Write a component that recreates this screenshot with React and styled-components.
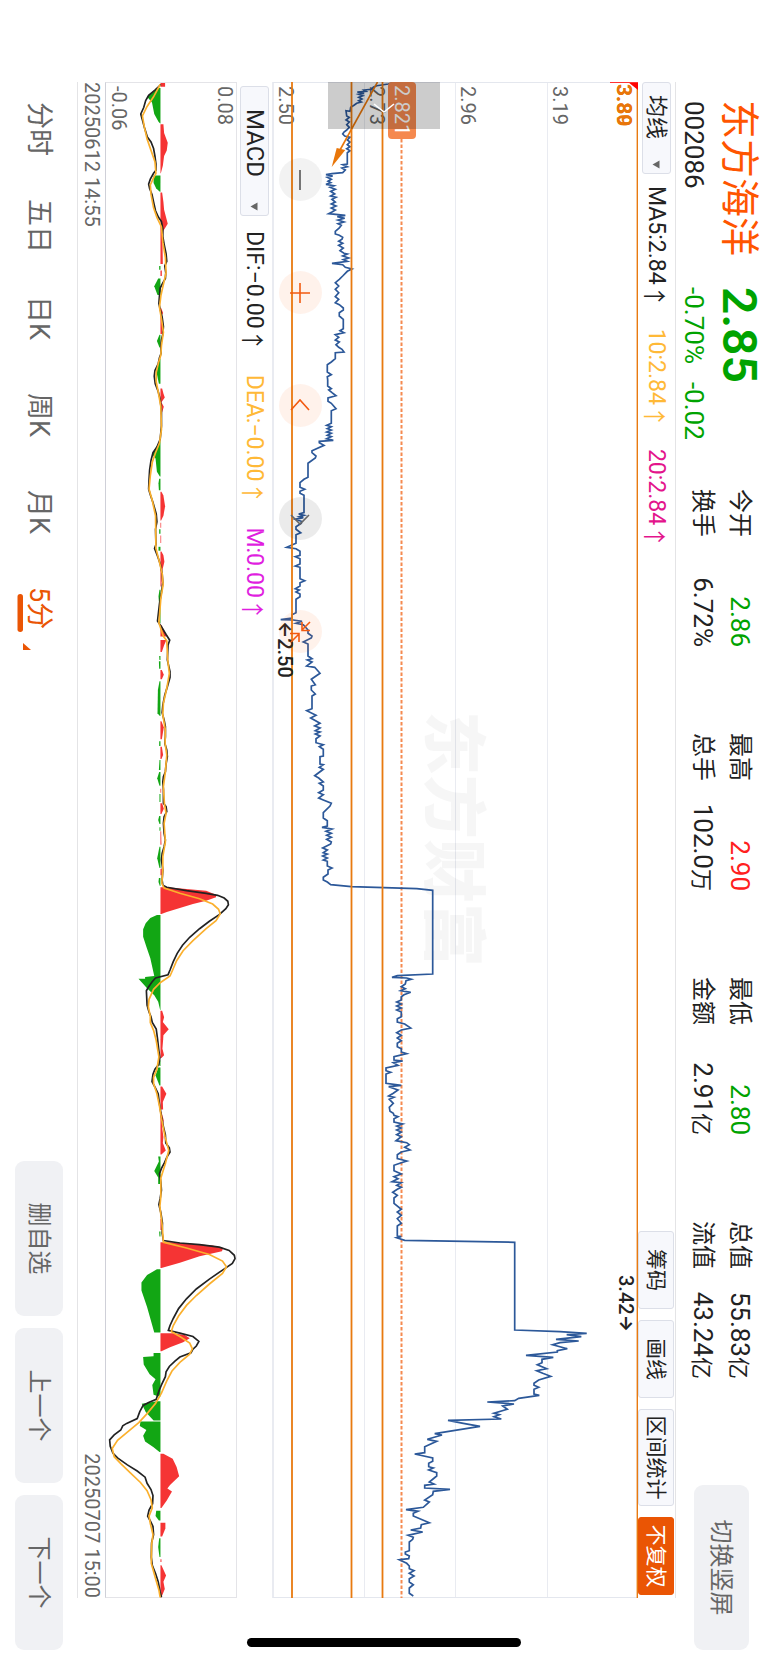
import React from "react";
import styled, { createGlobalStyle, css } from "styled-components";

const GlobalStyle = createGlobalStyle`
  * { box-sizing: border-box; }
  body {
    margin: 0;
    background: #fff;
    color: #222;
    font-family: Roboto, "Noto Sans CJK SC", sans-serif;
  }
  button, select { font-family: inherit; color: inherit; margin: 0; }
`;

/* ---------- landscape frame ---------- */

const Viewport = styled.div`
  width: 100vw;
  height: 100vh;
  overflow: hidden;
`;

const Landscape = styled.main`
  position: relative;
  display: flex;
  flex-direction: column;
  width: 100vh;
  height: 100vw;
  background: #fff;
  transform-origin: 0 0;
  transform: translateX(100vw) rotate(90deg);
`;

const HomeIndicator = styled.div`
  position: absolute;
  right: 16px;
  top: 50%;
  width: 9px;
  height: 274px;
  margin-top: -137px;
  border-radius: 5px;
  background: #000;
`;

/* ---------- header ---------- */

const Header = styled.header`
  display: flex;
  height: 92px;
  padding-left: 100px;
  padding-right: 13px;
`;

const Identity = styled.div`
  width: 187px;
  padding-top: 6px;
`;

const StockName = styled.h1`
  margin: 0;
  font-size: 39px;
  line-height: 46px;
  font-weight: 400;
  color: #ff5500;
`;

const StockCode = styled.div`
  padding-left: 1px;
  font-size: 26px;
  line-height: 44px;
`;

const Quote = styled.div`
  width: 202px;
  padding-top: 6px;
  color: #00a300;
`;

const Price = styled.div`
  font-size: 48px;
  line-height: 46px;
  font-weight: 600;
`;

const Change = styled.div`
  display: flex;
  gap: 18px;
  font-size: 26px;
  line-height: 44px;
`;

const Stats = styled.dl`
  display: grid;
  grid-auto-flow: column;
  grid-template-rows: 37px 37px;
  grid-auto-columns: 158px;
  column-gap: 86px;
  margin: 0;
  padding-top: 10px;
`;

const Stat = styled.div`
  display: flex;
  justify-content: space-between;
  align-items: center;
`;

const StatLabel = styled.dt`
  font-size: 24px;
  line-height: 37px;
`;

const StatValue = styled.dd`
  margin: 0;
  font-size: 26px;
  line-height: 37px;
  color: ${(p) => p.$color || "inherit"};
`;

const Unit = styled.span`
  font-size: 22px;
`;

const GreyButton = styled.button`
  width: ${(p) => p.$width}px;
  height: ${(p) => p.$height}px;
  padding: 0;
  border: 0;
  border-radius: 9px;
  background: #f0f1f4;
  color: #666;
  font-size: 24px;
  line-height: 30px;
`;

const SwitchSlot = styled.div`
  margin-left: auto;
  padding-top: 19px;
`;

/* ---------- chart panel ---------- */

const Panel = styled.section`
  flex: 1;
  display: flex;
  flex-direction: column;
  margin: 0 65px 0 82px;
`;

const Toolbar = styled.div`
  display: flex;
  align-items: center;
  height: ${(p) => p.$height}px;
  padding: 0 3px 0 ${(p) => p.$inset || 0}px;
  border-top: 1px solid ${(p) => (p.$line ? "#e4e4e6" : "#e9ebf1")};
`;

const Picker = styled.label`
  position: relative;
  display: block;
  width: ${(p) => p.$width}px;
  height: 29px;
  margin-right: ${(p) => p.$after}px;
  svg {
    position: absolute;
    right: 5px;
    top: 11px;
    pointer-events: none;
  }
`;

const PickerSelect = styled.select`
  appearance: none;
  width: 100%;
  height: 100%;
  padding: 0 0 0 ${(p) => p.$pad}px;
  border: 1px solid #dcdfe8;
  border-radius: 3px;
  background: #f7f8fc;
  font-size: ${(p) => p.$size}px;
  line-height: 27px;
`;

const Indicator = styled.span`
  display: flex;
  align-items: center;
  gap: 6px;
  margin-right: ${(p) => p.$after}px;
  font-size: 23px;
  line-height: 30px;
  color: ${(p) => p.$color};
`;

const Tools = styled.div`
  display: flex;
  gap: 11px;
  margin-left: auto;
`;

const ToolButton = styled.button`
  width: ${(p) => (p.$wide ? 97 : 78)}px;
  height: 36px;
  padding: 0;
  border: 1px solid #dcdfe8;
  border-radius: 3px;
  background: #f7f8fc;
  font-size: 21px;
  line-height: 30px;
  ${(p) =>
    p.$active &&
    css`
      border-color: #ea5504;
      background: #ea5504;
      color: #fff;
    `}
`;

const ChartArea = styled.div`
  position: relative;
  flex: 1;
  display: flex;
  border: solid #e4e7ee;
  border-width: 0 1px;
`;

const PriceRows = styled.div`
  flex: 1;
  display: grid;
  grid-template-rows: repeat(4, 1fr);
`;

const PriceRow = styled.div`
  display: flex;
  align-items: flex-end;
  padding: 0 0 1px 3px;
  border-bottom: 1px solid #e9ebf1;
  font-size: 20px;
  line-height: 22px;
  color: #666;
`;

const Plot = styled.svg`
  position: absolute;
  inset: 0 -1px;
  width: calc(100% + 2px);
  height: 100%;
`;

const Watermark = styled.div`
  position: absolute;
  left: 628px;
  top: 140px;
  font-size: 64px;
  line-height: 92px;
  font-weight: 900;
  color: rgba(0, 0, 0, 0.035);
`;

const PriceTag = styled.div`
  position: absolute;
  left: -1px;
  top: 222px;
  width: 57px;
  height: 28px;
  padding-left: 3px;
  border-radius: 4px;
  background: #f5894f;
  color: #fff;
  font-size: 20px;
  line-height: 28px;
`;

const LevelLabel = styled.div`
  position: absolute;
  left: 1px;
  top: 2px;
  font-size: 21px;
  line-height: 24px;
  font-weight: 700;
  color: #e8760a;
`;

const Extreme = styled.div`
  position: absolute;
  left: ${(p) => p.$x}px;
  top: ${(p) => p.$y}px;
  display: flex;
  align-items: center;
  font-size: 20px;
  line-height: 22px;
  font-weight: 500;
`;

const Drawer = styled.button`
  position: absolute;
  left: -1px;
  top: 198px;
  width: 47px;
  height: 112px;
  padding: 0;
  border: 0;
  background: rgba(0, 0, 0, 0.2);
  svg { display: block; margin-left: 17px; }
`;

const ZoomBar = styled.div`
  position: absolute;
  left: 75px;
  bottom: 6px;
  display: flex;
  gap: 70px;
`;

const RoundButton = styled.button`
  width: 43px;
  height: 43px;
  padding: 0;
  border: 0;
  border-radius: 50%;
  background: ${(p) => p.$bg};
  svg { display: block; margin: auto; }
`;

const MacdArea = styled.div`
  position: relative;
  display: flex;
  flex-direction: column;
  justify-content: space-between;
  height: 132px;
  padding: 0 0 2px 3px;
  border: 1px solid #e4e4e8;
  border-bottom-color: #cfd0d8;
  font-size: 20px;
  line-height: 22px;
  color: #666;
`;

const Dates = styled.div`
  display: flex;
  justify-content: space-between;
  height: 28px;
  border-bottom: 1px solid #e4e4e6;
  font-size: 20px;
  line-height: 27px;
  color: #666;
`;

/* ---------- footer ---------- */

const Footer = styled.footer`
  display: flex;
  align-items: center;
  height: 77px;
  padding: 0 13px 2px 102px;
`;

const Tabs = styled.nav`
  display: flex;
`;

const Tab = styled.a`
  position: relative;
  width: 97px;
  font-size: 27px;
  line-height: 36px;
  text-decoration: none;
  color: ${(p) => (p.$active ? "#ea5504" : "#666")};
  svg { position: absolute; left: 6px; top: 25px; }
`;

const FooterButtons = styled.div`
  display: flex;
  gap: 12px;
  margin-left: auto;
`;

/* ---------- chart data ---------- */

const pairs = (s) => s.trim().split(/\s+/).map((p) => p.split(",").map(Number));

/* price samples: level, time; each run begins at its own time offset */
const PRICE_RUNS = [
  [0, `400,38 385,42 350,47 340,52 335,58 312,60 318,64 292,66 312,70 296,73 308,77 296,82 306,87 296,92 304,96 290,100 282,106 272,112 270,124 258,122 260,138 268,142 258,150 268,156 260,164 268,172 260,180 252,186 248,192 254,198 270,202 262,210 270,216 262,224 270,230 260,236 270,242 262,248 262,282 248,284 262,290 246,294 256,300 248,308 216,311 198,314 218,318 202,322 214,328 204,334 212,338 198,343 222,347 210,352 226,358 212,364 224,372 212,378 228,382 216,388 226,396 214,402 228,408 214,414 226,420 216,426 206,431 256,436 232,440 254,445 234,450 252,456 234,461 244,466 238,474 226,484 226,492 238,496 248,502 246,508 236,514 248,520 236,526 250,534 240,542 252,550 262,552 248,558 266,564 250,569 262,574 216,580 248,584 256,592 276,597 262,604 248,618 238,628 226,638 236,648 226,658 236,668 226,680 236,688 226,698 238,704 250,714 250,720 238,728 238,738 250,748 250,776 240,782 252,788 226,794 236,802 226,810 238,816 228,824 236,832 246,838 252,846 226,848 226,866 214,876 202,884 202,906 214,914 202,920`],
  [930, `203,0 203,18 214,26 206,30 216,38 228,47 204,54 204,64 214,70 228,86 214,92 214,130 200,136 214,140 202,146 214,150 200,156 214,160 202,166 214,170 200,176 220,181 178,184 178,188 192,196 156,212 156,218 168,228 166,234 144,250 144,292 132,298 120,308 120,322 134,328 120,334 120,340 132,346 132,398 116,402 132,406 118,410 130,413 106,418 124,424 124,430 108,440 108,448 122,458 108,464 108,490 80,502 108,506 120,514 120,526 106,530 120,536 120,552 106,558 120,562 120,596 134,602 120,608 120,618 106,626 118,630 108,636 120,642 120,650 108,658 108,698 96,704 96,714 62,719 100,720 126,724 108,730 130,734 144,750 144,760 156,768 154,774 130,786 144,792 144,828 156,836 142,840 156,846 140,858 164,862 180,880 154,898 166,914 154,918`],
  [1860, `154,0 166,12 156,18 156,56 140,62 168,76 152,84 180,100 164,108 180,114 166,122 180,126 166,132 180,138 168,146 168,158 190,164 178,170 190,178 190,198 180,200 180,222 190,224 178,232 190,238 164,257 176,264 190,276 178,280 190,288 190,300 176,308 190,314 176,324 190,330 214,340 210,348 190,368 190,384 202,392 202,408 186,412 216,417 198,424 214,430 200,436 214,442 200,448 214,456 212,462 188,474 202,480 190,488 202,492 188,498 202,504 190,510 202,514 202,528 216,534 204,540 204,552 190,562 190,570 202,576 212,584 274,590 470,596 518,601 518,852 412,857 396,862 440,864 454,868 438,872 436,882 424,890 436,896 422,902 452,907 432,914 424,920 424,930 410,936 424,942 410,948 424,954 410,960 424,966 424,980 412,986 412,996 434,1002 452,1014`],
  [2820, `424,60 410,68 424,76 412,84 424,92 412,100 412,110 424,116 424,126 440,131 402,140 402,150 428,153 400,158 414,166 378,174 378,182 392,187 378,192 378,220 424,226 386,230 414,240 400,250 386,258 402,262 388,268 400,280 388,292 390,304 400,310 402,316 414,320 402,326 402,336 428,342 410,348 424,354 410,360 424,366 410,374 424,380 408,392 440,398 448,404 434,412 450,420 424,426 412,434 412,446 440,453 424,458 402,466 402,482 424,492 402,500 414,506 396,515 424,518 410,526 424,532 412,538 398,547 412,556 402,564 402,580 424,598 412,606 424,616 412,626 424,640 412,648 412,678 424,680 410,683 434,691 764,697`],
  [3690, `764,90 900,95 980,100 920,104 964,110 888,118 956,123 900,128 878,134 922,146 892,152 892,156 798,166 880,172 846,178 846,188 832,194 860,206 830,212 848,220 872,229 836,240 822,250 822,256 836,262 822,268 822,282 838,286 776,295 764,302 682,306 762,312 728,318 742,328 702,340 718,344 702,350 724,357 564,361 610,370 660,379 524,401 546,405 502,418 530,424 494,440 494,458 464,462 518,474 518,484 506,490 506,500 520,504 506,510 530,518 530,528 508,546 522,552 494,556 494,564 570,568 520,574 518,584 494,600 508,606 490,622 438,629 474,634 460,640 460,648 508,668 484,674 482,684 452,690 488,696 444,706 460,712 458,718 448,726 448,752 436,756 436,762 448,768 446,776 418,779 440,790 448,798 448,806 462,812 448,820 462,828 448,836 448,846 460,854 448,864 448,880 460,888`],
];

const priceLine = PRICE_RUNS.flatMap(([offset, run]) =>
  pairs(run).map(([v, t]) => [(t + offset) / 3 - 12, 378 - v / 3])
)
  .map(([x, y]) => `${x.toFixed(1)},${y.toFixed(1)}`)
  .join(" ");

/* MACD runs: start on the time axis, samples per pixel */
const RUN_A = [-12, 2.613];
const RUN_B = [558, 3];
const RUN_C = [938, 2.439];

const macdPoint = ([start, density]) => ([v, t]) =>
  `${(start + t / density).toFixed(1)},${(237 - v / 3).toFixed(1)}`;

const macdLine = (runs) =>
  runs.map(([run, s]) => pairs(s).map(macdPoint(run)).join(" ")).join(" ");

const DIF = macdLine([
  [RUN_A, `482,38 465,52 445,66 436,80 430,98 421,115 425,128 432,150 441,175 452,188 460,205 464,225 467,245 467,262 460,270 450,285 445,298 448,310 455,325 460,345 466,368 475,385 484,396 488,415 488,435 492,455 498,480 500,500 494,512 497,530 496,545 488,556 480,570 478,590 476,610 480,625 486,645 490,670 488,690 484,705 482,720 483,740 478,752 474,768 464,785 462,800 465,820 474,840 480,860 484,890 484,930 480,965 470,985 458,1000 452,1020 448,1045 446,1070 445,1095 450,1110 458,1130 468,1160 470,1180 466,1200 467,1240 463,1250 472,1270 480,1290 486,1315 488,1340 484,1365 478,1395 472,1440 484,1455 498,1475 509,1490`],
  [RUN_B, `504,15 502,60 510,95 510,112 502,140 494,165 488,195 486,218 492,240 496,260 496,290 494,310 500,330 502,350 498,372 496,395 490,410 488,425 490,450 490,490 498,500 500,515 492,530 490,550 492,580 496,600 492,620 486,640 484,660 488,690 486,720 488,736 500,742 560,752 620,760 655,766 675,774 686,784 688,794 680,806 660,824 630,844 600,866 570,892 548,916 532,940 520,965 510,990 504,1004 466,1014 455,1026 444,1042 438,1052 440,1095 446,1116 452,1130`],
  [RUN_C, `456,6 468,22 472,45 476,75 479,92 476,108 464,120 458,132 455,150 465,165 474,180 478,205 484,235 490,260 496,280 497,300 508,312 510,322 500,335 492,350 484,362 478,375 482,395 484,415 480,435 476,450 482,470 487,495 486,520 490,538 540,544 600,548 660,554 690,562 706,574 708,582 700,594 670,610 630,632 590,656 560,680 536,704 520,728 510,745 505,757 540,764 580,772 598,784 590,795 580,803 574,812 540,822 525,832 508,845 498,858 496,870 484,890 476,905 468,925 445,933 428,940 418,955 410,972 378,984 366,990 360,1000 340,1012 326,1024 328,1040 336,1056 350,1068 380,1085 410,1100 434,1115 440,1130 452,1145 458,1160 457,1180 446,1195 442,1210 450,1222 458,1235 460,1255 454,1275 453,1310 456,1330 466,1350 474,1370 480,1395 484,1408`],
]);

const DEA = macdLine([
  [RUN_A, `480,38 460,70 440,95 426,120 432,150 440,180 452,210 464,240 467,270 458,285 450,300 452,325 460,360 470,385 484,410 488,450 496,490 498,530 490,560 482,590 478,620 484,650 490,685 484,720 482,745 475,765 468,790 468,815 474,840 482,880 484,940 478,975 466,1000 456,1025 450,1060 446,1095 456,1125 466,1165 467,1250 476,1280 486,1315 489,1345 482,1380 476,1445 490,1480`],
  [RUN_B, `500,2 503,60 508,100 500,145 490,190 488,225 496,270 495,310 500,345 496,395 490,440 493,490 498,520 492,550 496,605 488,650 488,690 485,730 492,744 540,760 600,776 640,792 658,808 663,822 650,842 620,866 580,902 550,932 530,962 518,990 510,1008 480,1028 460,1048 446,1078 444,1100 450,1130`],
  [RUN_C, `450,6 460,25 468,50 476,90 470,120 460,140 460,155 470,180 478,210 484,240 495,285 506,318 496,350 482,385 482,430 479,455 486,500 490,542 560,556 630,572 670,588 682,602 670,618 630,644 590,672 560,696 536,722 520,745 514,760 540,772 570,788 578,802 570,815 540,835 516,856 500,880 484,910 466,935 440,960 415,982 380,1005 350,1025 334,1045 340,1065 360,1082 390,1105 420,1128 440,1148 452,1170 456,1190 446,1210 450,1228 458,1255 454,1280 453,1325 465,1360 476,1390 480,1408`],
]);

/* histogram hills, above (red) and below (green) the zero line */
const HISTOGRAM = [
  [RUN_A, [
    "495,34 495,44",
    "470,47 440,70 455,85 462,115 475,135 480,140",
    "490,142 492,165 503,190 500,210 492,225 488,250 482,270",
    "460,276 460,295 468,310 479,318",
    "486,320 490,345 492,365 503,402 490,420 487,440 488,507",
    "477,512 477,522",
    "485,524 485,538",
    "474,545 462,565 472,588",
    "483,622 489,635 483,645 486,660 486,690",
    "478,692 470,708 478,725",
    "478,755 469,790 476,820",
    "486,832 490,845 494,856 484,868 491,880 484,900",
    "478,970 455,1005 466,1015 470,1050 479,1062",
    "477,1068 475,1080 476,1098",
    "484,1102 490,1112 495,1140 490,1165 483,1177",
    "483,1183 483,1196",
    "477,1200 477,1212",
    "483,1216 483,1236",
    "475,1246 475,1256",
    "484,1258 490,1268 493,1285 486,1310 484,1350",
    "478,1358 475,1375 477,1400 477,1445",
    "484,1450 500,1480",
  ]],
  [RUN_B, [
    "499,0 492,16 485,36",
    "477,48 478,60",
    "476,64 477,86",
    "485,90 491,104 485,118",
    "478,124 473,150 472,220 479,228",
    "484,244 491,262 485,298",
    "477,304 477,318",
    "485,320 489,345 484,357",
    "478,360 476,390",
    "477,396 471,415 478,437",
    "483,446 483,458",
    "478,462 478,486",
    "486,490 491,506 484,522",
    "477,528 474,540 478,552",
    "478,562 478,572",
    "483,574 484,614",
    "478,620 471,655 478,684",
    "485,686 485,706",
    "476,714 475,726 479,738",
    "500,742 620,752 650,764 650,772 620,782 580,792 540,804 500,816 484,822",
    "470,825 450,834 436,850 428,868 428,890 438,920 450,955 462,1008 434,1011 434,1016 414,1016 440,1045 462,1066 474,1085 480,1110",
    "486,1112 492,1132 488,1146 506,1168 490,1186 489,1200",
  ]],
  [RUN_C, [
    "489,48 487,70 492,86 484,93",
    "478,98 478,112",
    "474,116 466,135 478,160",
    "486,162 499,180 488,200 489,218",
    "484,224 491,245 486,262 490,285 488,300 497,318 484,328",
    "474,333 476,345 462,368 474,384 474,400",
    "484,485 485,512",
    "477,516 478,528",
    "520,542 640,550 672,556 668,564 600,576 540,592 484,605",
    "470,608 440,622 423,640 423,660 440,700 462,762",
    "520,764 555,768 570,776 550,786 510,798 484,808",
    "460,812 460,820 428,822 430,840 448,864 466,876 456,890 460,914 476,918",
    "470,930 424,936 436,956 460,977",
    "420,979 418,990 438,1000 428,1014 434,1028 460,1042 478,1054",
    "490,1058 518,1070 530,1090 538,1113 510,1134 502,1143 516,1150 500,1172 484,1190",
    "468,1197 466,1210 476,1221",
    "496,1226 496,1240 486,1260",
    "477,1264 474,1285 478,1310",
    "484,1315 484,1322",
    "484,1330 498,1355 490,1370 494,1388 484,1408",
  ]],
];

const hills = HISTOGRAM.flatMap(([run, list]) =>
  list.map((s) => {
    const pts = pairs(s);
    const closed = [[481, pts[0][1]], ...pts, [481, pts[pts.length - 1][1]]];
    return {
      color: pts[0][0] > 481 ? "#f53434" : "#12a614",
      points: closed.map(macdPoint(run)).join(" "),
    };
  })
);

/* ---------- small drawings ---------- */

const Caret = () => (
  <svg width="9" height="8" viewBox="0 0 9 8" aria-hidden="true">
    <path d="M0.5 0.5h8L4.500 7.500z" fill="#666" />
  </svg>
);

const Icon = ({ d, color }) => (
  <svg width="24" height="24" viewBox="-12 -12 24 24" aria-hidden="true">
    <path d={d} fill="none" stroke={color} strokeWidth="1.600" />
  </svg>
);

const ArrowUp = styled.span`
  font-family: "Noto Sans CJK SC", sans-serif;
  width: 11px;
  display: flex;
  justify-content: center;
`;

const ArrowSide = styled.span`
  font-family: Inter, sans-serif;
  font-size: 18px;
  font-weight: 700;
`;

const STATS = [
  ["今开", "2.86", "", "#00a300"],
  ["换手", "6.72%", ""],
  ["最高", "2.90", "", "#ff2020"],
  ["总手", "102.0", "万"],
  ["最低", "2.80", "", "#00a300"],
  ["金额", "2.91", "亿"],
  ["总值", "55.83", "亿"],
  ["流值", "43.24", "亿"],
];

const ORANGE_BG = "rgba(255, 85, 0, 0.08)";
const ZOOM_BUTTONS = [
  ["缩小", "M-10 0h20", "#555", "rgba(0,0,0,0.05)"],
  ["放大", "M-10 0h20M0 -10v20", "#f25a10", ORANGE_BG],
  ["左移", "M4 -9L-6 0L4 9", "#f25a10", ORANGE_BG],
  ["右移", "M-4 -9L5 0L-4 9", "#666", "rgba(0,0,0,0.08)"],
  ["收起", "M-10 -10L-2 -2M-10 -2H-1.500V-10M10 9L2 1M1.500 10V1H10", "#f25a10", ORANGE_BG],
];

const Line = ({ text, color, after = 27 }) => (
  <Indicator $color={color} $after={after}>
    {text}
    <ArrowUp>↑</ArrowUp>
  </Indicator>
);

export default function App() {
  return (
    <Viewport>
      <GlobalStyle />
      <Landscape>
        <Header>
          <Identity>
            <StockName>东方海洋</StockName>
            <StockCode>002086</StockCode>
          </Identity>
          <Quote>
            <Price>2.85</Price>
            <Change>
              <span>-0.70%</span>
              <span>-0.02</span>
            </Change>
          </Quote>
          <Stats>
            {STATS.map(([label, value, unit, color]) => (
              <Stat key={label}>
                <StatLabel>{label}</StatLabel>
                <StatValue $color={color}>
                  {value}
                  {unit && <Unit>{unit}</Unit>}
                </StatValue>
              </Stat>
            ))}
          </Stats>
          <SwitchSlot>
            <GreyButton $width={165} $height={55}>切换竖屏</GreyButton>
          </SwitchSlot>
        </Header>

        <Panel>
          <Toolbar $height={38} $line>
            <Picker $width={92} $after={12}>
              <PickerSelect $pad={12} $size={22} aria-label="主图指标" defaultValue="均线">
                <option>均线</option>
              </PickerSelect>
              <Caret />
            </Picker>
            <Line text="MA5:2.84" color="#222" />
            <Line text="10:2.84" color="#ffb937" />
            <Line text="20:2.84" color="#e3148c" />
            <Tools>
              <ToolButton>筹码</ToolButton>
              <ToolButton>画线</ToolButton>
              <ToolButton $wide>区间统计</ToolButton>
              <ToolButton $active>不复权</ToolButton>
            </Tools>
          </Toolbar>

          <ChartArea>
            <Watermark>东方财富</Watermark>
            <PriceRows>
              {["3.19", "2.96", "2.73", "2.50"].map((p) => (
                <PriceRow key={p}>{p}</PriceRow>
              ))}
            </PriceRows>
            <Plot viewBox="0 0 1516 365" preserveAspectRatio="none" aria-hidden="true">
              <path d="M57 236.500H1516" stroke="#f58a50" strokeWidth="2" strokeDasharray="3.500 2" />
              <polyline points={priceLine} fill="none" stroke="#2c5899" strokeWidth="1.700" strokeLinejoin="miter" />
              <path d="M0 0.500H1516M0 255.500H1516M0 286.500H1516M0 346H1516" stroke="#e87a10" strokeWidth="1.800" />
              <path d="M0 260.500L68 298" stroke="#e8760a" strokeWidth="1.600" />
              <path d="M66 301.300L68 292.700L85 306.300Z" fill="#e8760a" />
              <path d="M0 0H8L0 10Z" fill="#f00" />
              <path d="M0.500 0V28" stroke="#f33" />
            </Plot>
            <LevelLabel>3.80</LevelLabel>
            <LevelLabel>3.89</LevelLabel>
            <PriceTag>2.821</PriceTag>
            <Extreme $x={1192} $y={1}>
              3.42<ArrowSide>→</ArrowSide>
            </Extreme>
            <Extreme $x={538} $y={342}>
              <ArrowSide>←</ArrowSide>2.50
            </Extreme>
            <Drawer aria-label="展开">
              <Icon d="M-7 -10L1 0L-7 10" color="#fff" />
            </Drawer>
            <ZoomBar>
              {ZOOM_BUTTONS.map(([name, d, color, bg]) => (
                <RoundButton key={name} aria-label={name} $bg={bg}>
                  <Icon d={d} color={color} />
                </RoundButton>
              ))}
            </ZoomBar>
          </ChartArea>

          <Toolbar $height={36} $inset={4}>
            <Picker $width={130} $after={15}>
              <PickerSelect $pad={22} $size={24} aria-label="副图指标" defaultValue="MACD">
                <option>MACD</option>
              </PickerSelect>
              <Caret />
            </Picker>
            <Line text="DIF:−0.00" color="#222" after={29} />
            <Line text="DEA:−0.00" color="#ffb937" after={29} />
            <Line text="M:0.00" color="#e01ee0" after={29} />
          </Toolbar>

          <MacdArea>
            <span>0.08</span>
            <span>-0.06</span>
            <Plot viewBox="0 0 1516 132" preserveAspectRatio="none" aria-hidden="true">
              {hills.map((h) => (
                <polygon key={h.points} points={h.points} fill={h.color} />
              ))}
              <polyline points={DIF} fill="none" stroke="#222" strokeWidth="1.700" />
              <polyline points={DEA} fill="none" stroke="#fbb02d" strokeWidth="1.700" />
            </Plot>
          </MacdArea>
          <Dates>
            <span>20250612 14:55</span>
            <span>20250707 15:00</span>
          </Dates>
        </Panel>

        <Footer>
          <Tabs>
            {["分时", "五日", "日K", "周K", "月K"].map((t) => (
              <Tab key={t} href="#">{t}</Tab>
            ))}
            <Tab href="#" $active>
              5分
              <svg width="60" height="20" viewBox="0 0 60 20" aria-hidden="true">
                <rect x="1" y="9" width="38" height="5.500" rx="2.700" fill="#ea5504" />
                <path d="M50 9H57V1Z" fill="#ea5504" />
              </svg>
            </Tab>
          </Tabs>
          <FooterButtons>
            <GreyButton $width={155} $height={48}>删自选</GreyButton>
            <GreyButton $width={155} $height={48}>上一个</GreyButton>
            <GreyButton $width={155} $height={48}>下一个</GreyButton>
          </FooterButtons>
        </Footer>
        <HomeIndicator />
      </Landscape>
    </Viewport>
  );
}
